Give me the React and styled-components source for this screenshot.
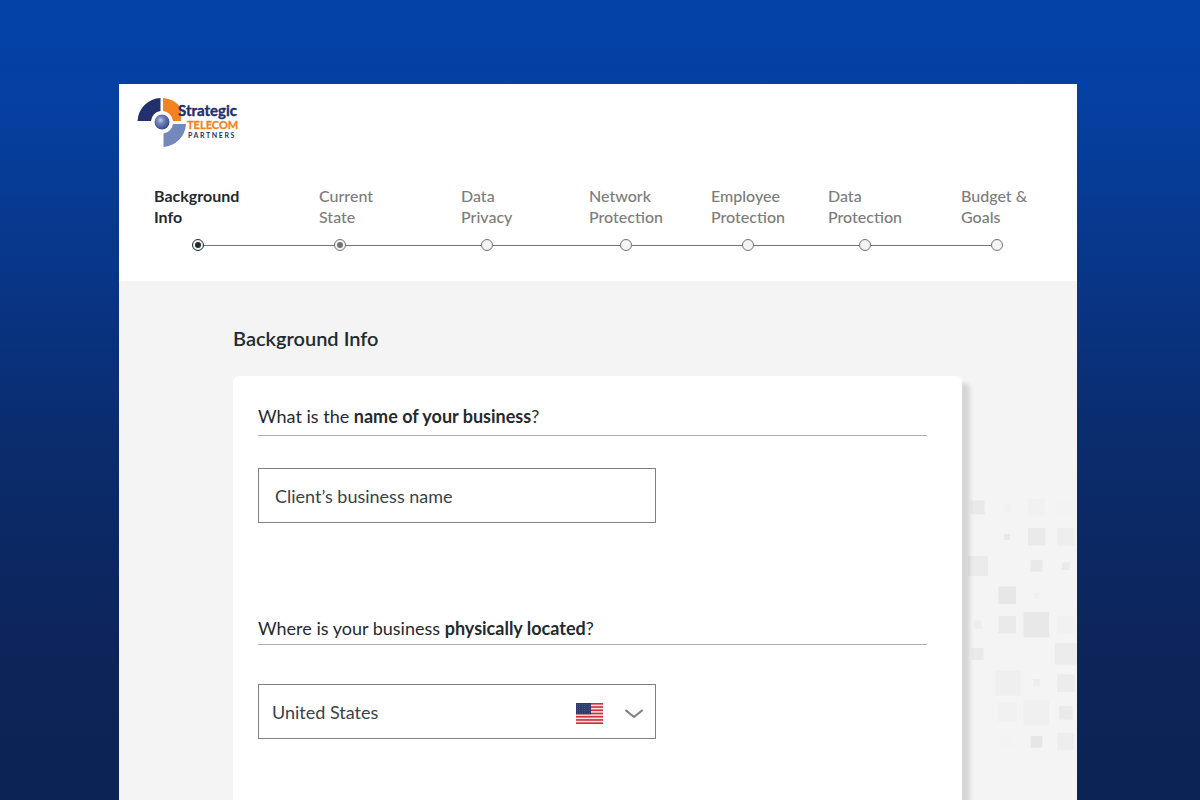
import React, { useState } from "react";
import styled, { createGlobalStyle, css } from "styled-components";

const GlobalStyle = createGlobalStyle`
  * {
    box-sizing: border-box;
  }
  body {
    margin: 0;
    font-family: Lato, "Liberation Sans", sans-serif;
    color: #1f2b30;
  }
`;

const Page = styled("div")`
  min-height: 100vh;
  padding: 84px 123px 0 119px;
  display: flex;
  background: linear-gradient(180deg, #0442a8 0%, #0540a2 12%, #0b2b6b 55%, #0d2459 80%, #0c2355 100%);
`;

const Sheet = styled("div")`
  flex: 1;
  display: flex;
  flex-direction: column;
  background: #ffffff;
`;

const Header = styled("header")`
  padding: 12px 44px 30px 18px;
`;

const LogoLink = styled("a")`
  display: inline-block;
  svg {
    display: block;
  }
`;

const Steps = styled("ol")`
  list-style: none;
  margin: 32px 0 0 17px;
  padding: 0;
  display: grid;
  grid-template-columns: 165fr 142fr 128fr 122fr 117fr 133fr 72fr;
`;

const StepLabel = styled("a")`
  display: block;
  width: min-content;
  font-size: 16px;
  line-height: 21px;
  font-weight: ${({ $current }) => ($current ? 700 : 500)};
  color: ${({ $current }) => ($current ? "#1f2b30" : "#7c7c7c")};
  text-decoration: none;
`;

const Track = styled("div")`
  display: flex;
  align-items: center;
  margin-top: 12px;
`;

const Line = styled("span")`
  height: 1px;
  background: ${({ $hidden }) => ($hidden ? "transparent" : "#737373")};
  ${({ $lead }) =>
    $lead
      ? css`
          width: ${$lead}px;
        `
      : css`
          flex: 1;
        `}
`;

const Dot = styled("span")`
  width: 12px;
  height: 12px;
  border: 1px solid ${({ $current }) => ($current ? "#1f2b30" : "#737373")};
  border-radius: 50%;
  background: #f4f4f4;
  display: flex;
  align-items: center;
  justify-content: center;
  &::after {
    content: "";
    width: 6px;
    height: 6px;
    border-radius: 50%;
    background: ${({ $current, $done }) => ($current ? "#1f2b30" : $done ? "#737373" : "transparent")};
  }
`;

const Main = styled("main")`
  position: relative;
  z-index: 0;
  flex: 1;
  display: flex;
  flex-direction: column;
  padding: 43px 115px 0 114px;
  background: #f4f4f4;
`;

const Pattern = styled("svg")`
  position: absolute;
  z-index: -1;
  top: 218px;
  right: 0;
`;

const Title = styled("h1")`
  margin: 0 0 24px;
  font-size: 20px;
  line-height: 28px;
  font-weight: 600;
`;

const Card = styled("form")`
  flex: 1;
  padding: 25px 35px 0 25px;
  border-radius: 6px 6px 0 0;
  background: #ffffff;
  box-shadow: 8px 7px 4px rgba(0, 0, 0, 0.12);
`;

const Field = styled("div")`
  margin-bottom: 90px;
`;

const Question = styled("label")`
  display: block;
  padding: 4px 0 ${({ $tight }) => ($tight ? 5 : 8)}px;
  margin-bottom: ${({ $tight }) => ($tight ? 39 : 32)}px;
  border-bottom: 1px solid #b0b0b0;
  font-size: 18px;
  line-height: 22px;
`;

const TextInput = styled("input")`
  display: block;
  width: 398px;
  max-width: 100%;
  height: 55px;
  padding: 0 16px;
  border: 1px solid #808080;
  border-radius: 0;
  background: #ffffff;
  color: #36434a;
  font: inherit;
  font-size: 18px;
  &::placeholder {
    color: #36434a;
    opacity: 1;
  }
`;

const SelectBox = styled("div")`
  position: relative;
  width: 398px;
  max-width: 100%;
`;

const Select = styled("select")`
  appearance: none;
  display: block;
  width: 100%;
  height: 55px;
  padding: 0 96px 0 13px;
  border: 1px solid #808080;
  border-radius: 0;
  background: #ffffff;
  color: #36434a;
  font: inherit;
  font-size: 18px;
`;

const SelectIcons = styled("span")`
  position: absolute;
  top: 2px;
  right: 13px;
  height: 100%;
  display: flex;
  align-items: center;
  gap: 22px;
  pointer-events: none;
`;

// lead is the length of the line that runs up to the step's dot
const steps = [
  { first: "Background", second: "Info", lead: 38, current: true },
  { first: "Current", second: "State", lead: 15, done: true },
  { first: "Data", second: "Privacy", lead: 20 },
  { first: "Network", second: "Protection", lead: 31 },
  { first: "Employee", second: "Protection", lead: 31 },
  { first: "Data", second: "Protection", lead: 31 },
  { first: "Budget &", second: "Goals", lead: 30 },
];

// x, y, size, colour
const squares = [
  [92, 61, 42, "#e9e9e9"],
  [190, 72, 22, "#f1f1f1"],
  [264, 57, 50, "#f1f1f1"],
  [350, 57, 54, "#f3f3f3"],
  [192, 162, 18, "#e8e8e8"],
  [264, 144, 52, "#eaeaea"],
  [351, 144, 53, "#eeeeee"],
  [84, 228, 60, "#ebebeb"],
  [272, 240, 35, "#e9e9e9"],
  [366, 247, 23, "#eaeaea"],
  [175, 319, 53, "#e7e7e7"],
  [280, 337, 19, "#f0f0f0"],
  [102, 422, 24, "#eeeeee"],
  [175, 408, 53, "#eaeaea"],
  [251, 396, 76, "#e8e8e8"],
  [351, 408, 52, "#f1f1f1"],
  [95, 504, 36, "#eaeaea"],
  [345, 489, 65, "#ececec"],
  [166, 572, 75, "#efefef"],
  [279, 597, 21, "#eeeeee"],
  [351, 583, 53, "#ececec"],
  [173, 668, 56, "#f1f1f1"],
  [251, 660, 76, "#f0f0f0"],
  [357, 678, 41, "#eaeaea"],
  [183, 768, 34, "#f3f3f3"],
  [272, 768, 35, "#e6e6e6"],
  [351, 759, 51, "#eeeeee"],
];

function Logo() {
  return (
    <svg width="106" height="54" viewBox="0 0 106 54" role="img" aria-label="Strategic Telecom Partners">
      <defs>
        <radialGradient id="ball" cx="0.4" cy="0.38" r="0.65">
          <stop offset="0" stopColor="#c3cbe4" />
          <stop offset="0.35" stopColor="#7486bd" />
          <stop offset="1" stopColor="#34468f" />
        </radialGradient>
      </defs>
      <path d="M0.5 25 A24 24 0 0 1 23.5 2 V15 A11 11 0 0 0 14 25 Z" fill="#23306e" />
      <path d="M26 2 A24 24 0 0 1 44 12 L44 25 H36 A11 11 0 0 0 26 15 Z" fill="#f58220" />
      <path d="M49 28 A24 24 0 0 1 26.5 51 V37.5 A11 11 0 0 0 36 28 Z" fill="#7488bb" />
      <circle cx="25" cy="26" r="7.5" fill="url(#ball)" />
      <g fontFamily="Lato, 'Liberation Sans', sans-serif" fontWeight="700">
        <text x="41" y="20" fontSize="15" fill="#23306e" stroke="#23306e" strokeWidth="0.4">
          Strategic
        </text>
        <text x="50" y="33" fontSize="11" fill="#f58220" stroke="#f58220" strokeWidth="0.3">
          TELECOM
        </text>
        <text x="51" y="42" fontSize="7" letterSpacing="1.6" fill="#23306e">
          PARTNERS
        </text>
      </g>
    </svg>
  );
}

function Flag() {
  return (
    <svg width="27" height="21" viewBox="0 0 27 21" aria-hidden="true">
      <rect width="27" height="21" fill="#f7dfe2" />
      {[0, 1, 2, 3, 4, 5, 6].map((i) => (
        <rect key={i} y={i * 3.23} width="27" height="1.62" fill="#d02f3a" />
      ))}
      <rect width="15" height="11.3" fill="#2c3a6b" />
      {[0, 1, 2, 3, 4].map((row) =>
        [0, 1, 2, 3, 4, 5].map((col) => (
          <circle key={`${row}-${col}`} cx={1.4 + col * 2.4} cy={1.3 + row * 2.15} r="0.4" fill="#8d97b8" />
        ))
      )}
    </svg>
  );
}

export default function App() {
  const [name, setName] = useState("");
  const [country, setCountry] = useState("United States");

  return (
    <Page>
      <GlobalStyle />
      <Sheet>
        <Header>
          <LogoLink href="#">
            <Logo />
          </LogoLink>
          <Steps>
            {steps.map((step, index) => (
              <li key={index}>
                <StepLabel href="#" $current={step.current}>
                  {step.first.replace(" ", "\u00a0")} {step.second}
                </StepLabel>
                <Track>
                  <Line $lead={step.lead} $hidden={index === 0} />
                  <Dot $current={step.current} $done={step.done} />
                  <Line $hidden={index === steps.length - 1} />
                </Track>
              </li>
            ))}
          </Steps>
        </Header>
        <Main>
          <Pattern width="109" height="251" viewBox="84 57 327 753" aria-hidden="true">
            {squares.map(([x, y, size, fill]) => (
              <rect key={`${x}-${y}`} x={x} y={y} width={size} height={size} fill={fill} />
            ))}
          </Pattern>
          <Title>Background Info</Title>
          <Card>
            <Field>
              <Question htmlFor="business-name">
                What is the <b>name of your business</b>?
              </Question>
              <TextInput
                id="business-name"
                type="text"
                placeholder="Client’s business name"
                value={name}
                onChange={(e) => setName(e.target.value)}
              />
            </Field>
            <Field>
              <Question htmlFor="location" $tight>
                Where is your business <b>physically located</b>?
              </Question>
              <SelectBox>
                <Select id="location" value={country} onChange={(e) => setCountry(e.target.value)}>
                  <option>United States</option>
                </Select>
                <SelectIcons>
                  <Flag />
                  <svg width="18" height="10" viewBox="0 0 18 10" fill="none" stroke="#808080" strokeWidth="2" aria-hidden="true">
                    <path d="M0.5 1 L9 8 L17.5 1" />
                  </svg>
                </SelectIcons>
              </SelectBox>
            </Field>
          </Card>
        </Main>
      </Sheet>
    </Page>
  );
}
